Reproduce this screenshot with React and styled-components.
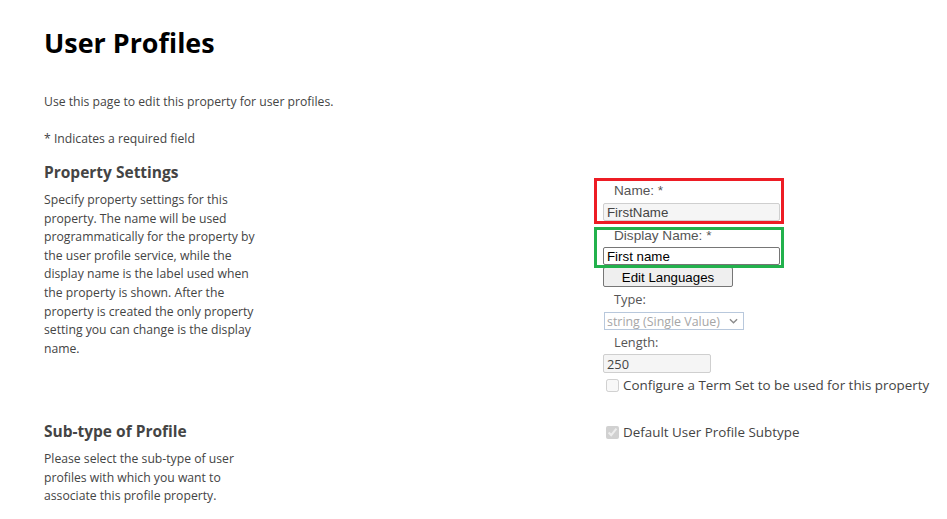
import React from "react";
import styled, { createGlobalStyle } from "styled-components";

const GlobalStyle = createGlobalStyle`
  body {
    margin: 0;
    background: #fff;
    font-family: "Open Sans", "Noto Sans", sans-serif;
    color: #444;
  }
`;

export default function App() {
  return (
    <>
      <GlobalStyle />
      <Page>
        <Title>User Profiles</Title>
        <Intro>Use this page to edit this property for user profiles.</Intro>
        <Note>* Indicates a required field</Note>

        <Section>
          <Side>
            <SectionHead>Property Settings</SectionHead>
            <SectionText>
              Specify property settings for this property. The name will be
              used programmatically for the property by the user profile
              service, while the display name is the label used when the
              property is shown. After the property is created the only
              property setting you can change is the display name.
            </SectionText>
          </Side>
          <Fields top={19}>
            <Group tone="#ed1c24" frame="-3px -3px -3px -3px">
              <FieldLabel arial top={1} bottom={3}>Name: *</FieldLabel>
              <TextBox readOnly value="FirstName" width={177} muted />
            </Group>
            <Group tone="#22b14c" frame="6px -3px -3px -3px">
              <FieldLabel arial top={6} bottom={2}>Display Name: *</FieldLabel>
              <TextBox readOnly value="First name" width={177} />
            </Group>
            <Button type="button">Edit Languages</Button>
            <FieldLabel top={3} bottom={4}>Type:</FieldLabel>
            <SelectWrap>
              <Select disabled defaultValue="string">
                <option value="string">string (Single Value)</option>
              </Select>
              <Chevron viewBox="0 0 10 6">
                <path d="M1 1l4 4 4-4" fill="none" stroke="#8a8a8a" strokeWidth="1.5" />
              </Chevron>
            </SelectWrap>
            <FieldLabel top={3} bottom={3}>Length:</FieldLabel>
            <TextBox readOnly value="250" width={108} height={19} muted segoe />
            <CheckRow top={3}>
              <input type="checkbox" disabled />
              <span>Configure a Term Set to be used for this property</span>
            </CheckRow>
          </Fields>
        </Section>

        <Section sub>
          <Side>
            <SectionHead>Sub-type of Profile</SectionHead>
            <SectionText>
              Please select the sub-type of user profiles with which you want
              to associate this profile property.
            </SectionText>
          </Side>
          <Fields top={0}>
            <CheckRow top={2}>
              <input type="checkbox" disabled defaultChecked />
              <span>Default User Profile Subtype</span>
            </CheckRow>
          </Fields>
        </Section>
      </Page>
    </>
  );
}

const Page = styled.div`
  padding: 26px 0 0 44px;
  font-size: 12.2px;
`;

const Title = styled.h1`
  margin: 0;
  font-size: 26.9px;
  font-weight: 700;
  line-height: 34px;
  color: #000;
`;

const Intro = styled.p`
  margin: 33px 0 0;
  line-height: 18px;
`;

const Note = styled.p`
  margin: 19px 0 0;
  line-height: 18px;
`;

const Section = styled.div`
  display: grid;
  grid-template-columns: 553px 1fr;
  margin-top: ${p => (p.sub ? "27px" : "14px")};
`;

const Side = styled.div`
  width: 222px;
`;

const SectionHead = styled.h2`
  margin: 0;
  font-size: 15.5px;
  font-weight: 700;
  line-height: 20px;
  color: #444;
`;

const SectionText = styled.p`
  margin: 9px 0 0;
  line-height: 18.6px;
`;

const Fields = styled.div`
  display: flex;
  flex-direction: column;
  align-items: flex-start;
  padding-top: ${p => p.top}px;
`;

const Group = styled.div`
  position: relative;
  display: flow-root;
  width: 184px;

  &::after {
    content: "";
    position: absolute;
    inset: ${p => p.frame};
    border: 3px solid ${p => p.tone};
    pointer-events: none;
  }
`;

const FieldLabel = styled.div`
  padding-left: 17px;
  line-height: 18px;
  margin: ${p => p.top}px 0 ${p => p.bottom}px;
  font-family: ${p => (p.arial ? '"Liberation Sans", Arial, sans-serif' : "inherit")};
  font-size: ${p => (p.arial ? "13.6px" : "12.8px")};
  color: #555;
  white-space: nowrap;
`;

const TextBox = styled.input.attrs({ type: "text" })`
  box-sizing: border-box;
  display: block;
  width: ${p => p.width}px;
  height: ${p => p.height || 18}px;
  margin-left: 6px;
  padding: 0 3px;
  border: 1px solid ${p => (p.muted ? "#cfcfcf" : "#767676")};
  border-radius: 2px;
  background: ${p => (p.muted ? "#f5f5f5" : "#fff")};
  color: ${p => (p.muted ? "#444" : "#000")};
  font-family: ${p => (p.segoe ? '"Open Sans", sans-serif' : '"Liberation Sans", Arial, sans-serif')};
  font-size: ${p => (p.segoe ? "12.8px" : "13.3px")};
  outline: none;
`;

const Button = styled.button`
  box-sizing: border-box;
  width: 130px;
  height: 20px;
  margin: 2px 0 0 6px;
  padding: 0;
  border: 1px solid #767676;
  border-radius: 2px;
  background: #efefef;
  color: #000;
  font-family: "Liberation Sans", Arial, sans-serif;
  font-size: 13.3px;
`;

const SelectWrap = styled.div`
  position: relative;
  margin-left: 7px;
`;

const Select = styled.select`
  box-sizing: border-box;
  display: block;
  appearance: none;
  width: 140px;
  height: 18px;
  padding: 0 0 0 2px;
  border: 1px solid #b8c8dc;
  border-radius: 0;
  background: #fff;
  color: #a6a6a6;
  font-family: "Open Sans", sans-serif;
  font-size: 12.4px;
  opacity: 1;
`;

const Chevron = styled.svg`
  position: absolute;
  right: 6px;
  top: 6px;
  width: 9px;
  height: 6px;
  pointer-events: none;
`;

const CheckRow = styled.label`
  display: flex;
  align-items: center;
  margin: ${p => p.top}px 0 0 9px;
  line-height: 18px;
  font-size: 13.4px;
  color: #444;
  white-space: nowrap;

  input {
    width: 13px;
    height: 13px;
    margin: 0 4px 0 0;
  }
`;
